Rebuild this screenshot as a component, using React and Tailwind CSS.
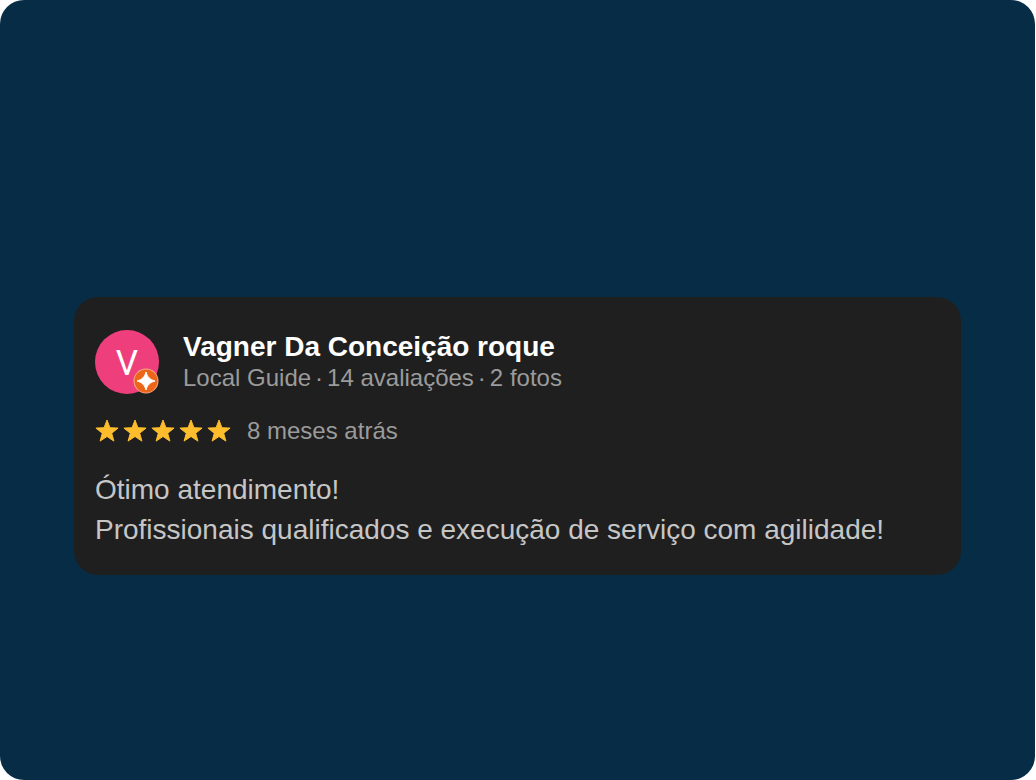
import React from 'react';

const review = {
  author: 'Vagner Da Conceição roque',
  details: ['Local Guide', '14 avaliações', '2 fotos'],
  rating: 5,
  date: '8 meses atrás',
  lines: ['Ótimo atendimento!', 'Profissionais qualificados e execução de serviço com agilidade!'],
};

const Star = () => (
  <svg
    viewBox="0 0 24 24"
    className="w-6 h-6 text-[#fdbd2c]"
    fill="currentColor"
    stroke="currentColor"
    strokeWidth="1"
    strokeLinejoin="round"
    aria-hidden="true"
  >
    <path d="M12 1l2.900 7.700 8.200.4-6.400 5.100 2.200 7.900L12 17.500l-6.900 4.600 2.200-7.900L.9 9.100l8.200-.4z" />
  </svg>
);

const Avatar = () => (
  <div className="relative w-16 h-16 shrink-0">
    <div className="w-16 h-16 pt-0.5 rounded-full bg-[#ee3f7c] flex items-center justify-center text-white text-[35px] leading-none font-[Roboto,sans-serif]">
      V
    </div>
    {/* Local Guide badge */}
    <svg viewBox="0 0 26 26" className="absolute right-0 bottom-0 w-[26px] h-[26px]" aria-hidden="true">
      <circle cx="13" cy="13" r="12.5" fill="#f5a987" />
      <circle cx="13" cy="13" r="11.5" fill="#ed6519" />
      <path d="M13 4c1.500 5.200 3.800 7.500 9 9-5.200 1.500-7.500 3.800-9 9-1.500-5.200-3.800-7.500-9-9 5.200-1.500 7.500-3.800 9-9z" fill="#fff" stroke="#fff" strokeLinejoin="round" />
    </svg>
  </div>
);

const App = () => {
  return (
    <div className="bg-white pr-px">
      <main className="min-h-screen flex flex-col justify-center pt-[92px] px-[74px] rounded-3xl bg-[#072d46] font-['Liberation_Sans',Arial,sans-serif]">
        <article className="rounded-3xl bg-[#1f1f1f] px-[21px] pt-[33px] pb-[25px]">
          <header className="flex items-center gap-6">
            <Avatar />
            <div>
              <h2 className="text-[28px] leading-8 font-bold text-white">{review.author}</h2>
              <p className="flex flex-wrap gap-x-1 text-2xl leading-[30px] text-[#9b9b9b]">
                {review.details.map((detail, i) => (
                  <React.Fragment key={detail}>
                    {i > 0 && <span>·</span>}
                    <span>{detail}</span>
                  </React.Fragment>
                ))}
              </p>
            </div>
          </header>

          <div className="flex items-center gap-4 mt-[23px]">
            <div className="flex gap-1" role="img" aria-label="5 estrelas">
              {Array.from({ length: review.rating }, (_, i) => (
                <Star key={i} />
              ))}
            </div>
            <span className="text-2xl leading-7 text-[#9b9b9b]">{review.date}</span>
          </div>

          <div className="mt-[25px] text-[28px] leading-10 text-[#c6c6c6]">
            {review.lines.map(line => (
              <p key={line}>{line}</p>
            ))}
          </div>
        </article>
      </main>
    </div>
  );
};

export default App;
